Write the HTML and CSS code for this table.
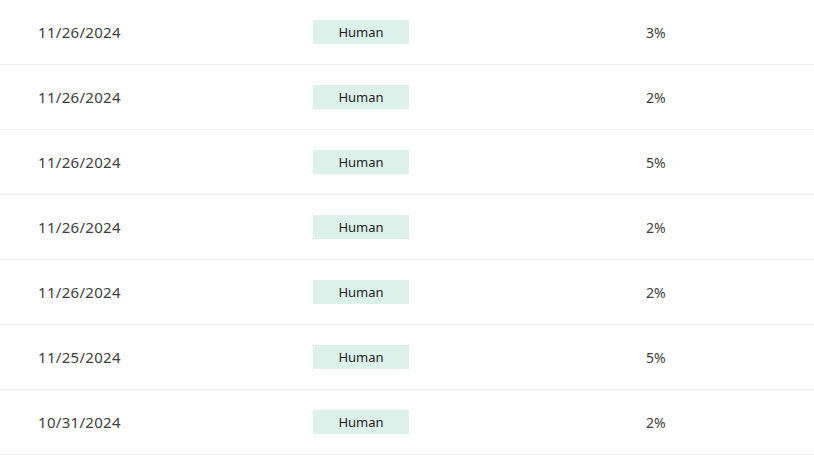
FILE: index.html
```html
<!DOCTYPE html>
<html>
<head>
<meta charset="utf-8">
<link rel="stylesheet" href="styles.css">
</head>
<body>
<div class="table">
  <div class="row"><span class="date">11/26/2024</span><span class="cell"><span class="badge">Human</span></span><span class="pct">3%</span></div>
  <div class="row"><span class="date">11/26/2024</span><span class="cell"><span class="badge">Human</span></span><span class="pct">2%</span></div>
  <div class="row"><span class="date">11/26/2024</span><span class="cell"><span class="badge">Human</span></span><span class="pct">5%</span></div>
  <div class="row"><span class="date">11/26/2024</span><span class="cell"><span class="badge">Human</span></span><span class="pct">2%</span></div>
  <div class="row"><span class="date">11/26/2024</span><span class="cell"><span class="badge">Human</span></span><span class="pct">2%</span></div>
  <div class="row"><span class="date">11/25/2024</span><span class="cell"><span class="badge">Human</span></span><span class="pct">5%</span></div>
  <div class="row"><span class="date">10/31/2024</span><span class="cell"><span class="badge">Human</span></span><span class="pct">2%</span></div>
</div>
</body>
</html>
```
FILE: styles.css
```css
html, body {
  margin: 0;
  padding: 0;
  background: #ffffff;
}
body {
  font-family: "Noto Sans", "DejaVu Sans", sans-serif;
  color: #333333;
}
.table {
  display: flex;
  flex-direction: column;
}
.row {
  display: grid;
  grid-template-columns: 275px 333px 1fr;
  align-items: center;
  height: 64px;
  padding-left: 38px;
  border-bottom: 1px solid #ececec;
}
.date {
  font-size: 15px;
  letter-spacing: 0.3px;
  color: #404040;
}
.cell {
  display: flex;
}
.badge {
  display: flex;
  align-items: center;
  justify-content: center;
  width: 96px;
  height: 24px;
  background: #dcf1e9;
  font-size: 13px;
  color: #1f1f1f;
}
.pct {
  font-size: 14px;
  color: #404040;
}
```
